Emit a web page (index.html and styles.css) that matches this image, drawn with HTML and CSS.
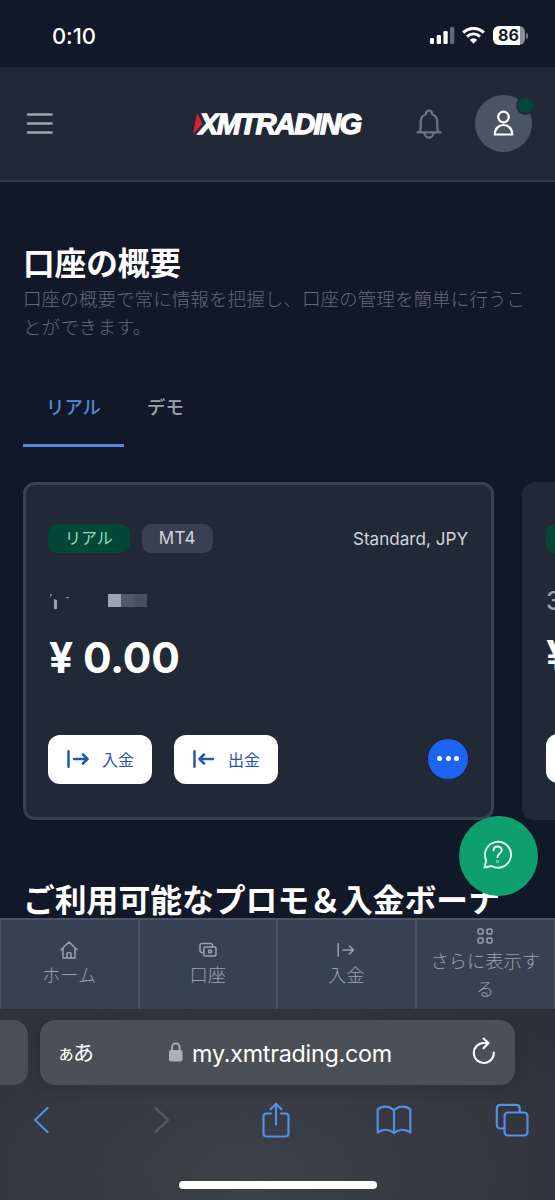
FILE: index.html
```html
<!DOCTYPE html>
<html lang="ja">
<head>
<meta charset="utf-8">
<meta name="viewport" content="width=device-width, initial-scale=1">
<title>口座の概要</title>
<link rel="stylesheet" href="styles.css">
</head>
<body>
<div class="phone">
  <div class="status">
    <span class="clock">0:10</span>
    <div class="indicators">
      <svg width="25" height="17" viewBox="0 0 25 17" fill="#fff"><rect x="0" y="11" width="4" height="6" rx="1.2"/><rect x="6.7" y="8" width="4.3" height="9" rx="1.2"/><rect x="13.4" y="4" width="4.3" height="13" rx="1.2"/><rect x="20" y="0" width="4.3" height="17" rx="1.2" opacity=".35"/></svg>
      <svg width="23" height="17" viewBox="0 0 23 17" fill="none" stroke="#fff"><path d="M1.2 5.7C7.2.1 15.8.1 21.8 5.7" stroke-width="3.2"/><path d="M5 9.7c4-3.6 9-3.6 13 0" stroke-width="3"/><path d="M7.8 12.700c2.300-2 5.100-2 7.400 0L11.500 16.800Z" fill="#fff" stroke="none"/></svg>
      <div class="battery"><span>86</span></div><i class="battery-tip"></i>
    </div>
  </div>
  <header class="header">
    <svg class="menu" width="27" height="22" viewBox="0 0 27 22" stroke="#9ca3af" stroke-width="2.600" stroke-linecap="round"><path d="M2 1.500h23.500M2 10.500h23.500M2 19.500h23.500"/></svg>
    <svg class="logo" width="176" height="28" viewBox="0 0 176 28">
      <path d="M5 3 10.500 13.500 1 24.500Z" fill="#d8232f"/>
      <text x="7" y="23.500" textLength="163" lengthAdjust="spacing" class="logo-text">XMTRADING</text>
    </svg>
    <svg class="bell" width="26" height="30" viewBox="0 0 26 30" fill="none" stroke="#6b7280" stroke-width="2.300" stroke-linejoin="round" stroke-linecap="round"><path d="M1.500 23.300h23M3.500 23.200c1-1.600 1.200-3 1.200-5.200v-5c0-4 1.800-6.400 5-7.700.2-2.200 1.400-3.700 3.300-3.700s3.100 1.500 3.300 3.700c3.200 1.300 5 3.700 5 7.700v5c0 2.200.2 3.600 1.200 5.200M8.500 24c.2 6 8.800 6 9 0"/></svg>
    <div class="avatar">
      <svg width="22" height="27" viewBox="0 0 22 27" fill="none" stroke="#fff" stroke-width="2.200" stroke-linejoin="round"><circle cx="10.500" cy="7" r="5.300"/><path d="M1.700 24.500c.2-12.700 17.400-12.700 17.600 0Z"/></svg>
      <i class="online"></i>
    </div>
  </header>
  <main class="main">
    <h1>口座の概要</h1>
    <p class="lead">口座の概要で常に情報を把握し、口座の管理を簡単に行うことができます。</p>
    <div class="tabs"><span class="tab active">リアル</span><span class="tab">デモ</span></div>
    <div class="cards">
      <section class="card selected">
        <div class="card-top"><span class="pill real">リアル</span><span class="pill">MT4</span><span class="type">Standard, JPY</span></div>
        <div class="account">
          <svg width="100" height="20" viewBox="0 0 100 20"><path d="M2 3h2l-1 3H2zM18 6h3v1.300h-3z" fill="#7c8390"/><path d="M6 8l3 1v9H6z" fill="#9ca3af"/><path d="M60 3h13v13H60z" fill="#9ca3b3"/><path d="M73 3h13v13H73z" fill="#515967"/><path d="M86 3h13v13H86z" fill="#48515f"/></svg>
        </div>
        <div class="balance">¥ 0.00</div>
        <div class="actions">
          <button class="btn"><svg width="22" height="18" viewBox="0 0 22 18"><path d="M1.500 1.200v15.600M7 9h13.300M16 4.500l4.500 4.500-4.500 4.500"/></svg>入金</button>
          <button class="btn"><svg width="22" height="18" viewBox="0 0 22 18"><path d="M1.500 1.200v15.600M20 9H6.500M11 4.500 6.500 9l4.500 4.500"/></svg>出金</button>
          <span class="more"><i></i><i></i><i></i></span>
        </div>
      </section>
      <section class="card next">
        <div class="card-top"><span class="pill real"></span></div>
        <div class="account number">3</div>
        <div class="balance">¥</div>
        <div class="actions"><span class="btn"></span></div>
      </section>
    </div>
    <h2>ご利用可能なプロモ＆入金ボーナ</h2>
    <div class="help">
      <svg width="31" height="31" viewBox="0 0 31 31" fill="none" stroke="#e7fff5" stroke-width="1.900" stroke-linecap="round" stroke-linejoin="round"><path d="M4.200 21.200A13 13 0 1 1 9.500 27L2.500 28.500Z"/><path d="M11.500 11.500c0-5.300 8.300-5.200 8.300-.4 0 3.100-4.300 3.400-4.300 7.200"/><circle cx="15.500" cy="22.500" r=".3"/></svg>
    </div>
  </main>
  <nav class="nav">
    <a><svg width="18" height="18" viewBox="0 0 18 18"><path d="M1 8.700 9 1l8 7.700M3 7v10h12V7M7 17v-4.500c0-1.500 4-1.500 4 0V17"/></svg>ホーム</a>
    <a><svg width="18" height="18" viewBox="0 0 18 18"><rect x="4.800" y="6" width="12.200" height="9" rx="1.500"/><path d="M4.500 11.500H3c-1.200 0-2-.8-2-2V4.300c0-1.100.8-1.800 2-1.800h8.500c1.200 0 2 .6 2 1.800V6"/><circle cx="11" cy="10.500" r="1.600"/></svg>口座</a>
    <a><svg width="18" height="18" viewBox="0 0 18 18"><path d="M1.200 2.500v12.600M6 9h10.500M12.500 5l4 4-4 4"/></svg>入金</a>
    <a><svg width="18" height="18" viewBox="0 0 18 18"><rect x="2" y="2" width="5" height="5" rx="1.600"/><rect x="11" y="2" width="5" height="5" rx="1.600"/><rect x="2" y="11" width="5" height="5" rx="1.600"/><rect x="11" y="11" width="5" height="5" rx="1.600"/></svg>さらに表示する</a>
  </nav>
  <footer class="browser">
    <div class="address-row">
      <div class="prev-tab"></div>
      <div class="address">
        <span class="aa"><small>ぁ</small>あ</span>
        <div class="url"><svg width="14" height="20" viewBox="0 0 14 20"><rect y="8" width="13.500" height="11.500" rx="2" fill="#adafb9"/><path d="M3 9V5.500C3 0 10.500 0 10.500 5.500V9" fill="none" stroke="#adafb9" stroke-width="1.800"/></svg><span>my.xmtrading.com</span></div>
        <svg class="reload" width="24" height="28" viewBox="0 0 24 28" fill="none" stroke="#fff" stroke-width="2" stroke-linecap="round" stroke-linejoin="round"><path d="M21.800 15.500A10 10 0 1 1 11.800 6h4.500M11.500 1.500 16.500 6l-5 5.300"/></svg>
      </div>
    </div>
    <div class="toolbar">
      <svg width="16" height="28" viewBox="0 0 16 28"><path d="M14.500 2 2 14l12.500 12"/></svg>
      <svg class="off" width="16" height="28" viewBox="0 0 16 28"><path d="M1.500 2 14 14 1.500 26"/></svg>
      <svg width="28" height="36" viewBox="0 0 28 36"><path d="M9 11.500H4.500c-2 0-3 1-3 3v17c0 2 1 3 3 3h19c2 0 3-1 3-3v-17c0-2-1-3-3-3H19M14 22.500V2M8.500 7.200 14 1.700l5.500 5.500"/></svg>
      <svg width="36" height="30" viewBox="0 0 36 30"><path d="M18 5.500C13.500.5 6 .5 1.700 4.500v23c5-3.500 11.300-3.500 16.300.5 5-4 11.300-4 16.300-.5v-23C30 .5 22.500.5 18 5.500ZM18 5.500V28"/></svg>
      <svg width="34" height="34" viewBox="0 0 34 34"><rect x="9.500" y="9.500" width="23" height="23" rx="3.500"/><path d="M9.500 25.500H5.500c-2.300 0-3.700-1.400-3.700-3.700V5.500c0-2.300 1.400-3.700 3.700-3.700H21c2.300 0 3.700 1.400 3.700 3.700v4"/></svg>
    </div>
    <div class="home-bar"></div>
  </footer>
</div>
</body>
</html>
```
FILE: styles.css
```css
* { box-sizing: border-box; }
body { margin: 0; background: #111827; font-family: Inter, "Noto Sans CJK JP", sans-serif; color: #fff; }
svg { display: block; flex: none; }
.phone { width: 555px; height: 1200px; display: flex; flex-direction: column; overflow: hidden; }

.status { height: 67px; flex: none; padding: 4px 27px 0 52px; display: flex; align-items: center; justify-content: space-between; }
.clock { font-size: 22px; font-weight: 500; letter-spacing: -.1px; }
.indicators { display: flex; align-items: center; }
.indicators svg + svg { margin-left: 7px; }
.battery { margin-left: 8px; width: 32px; height: 19px; border-radius: 6px; background: linear-gradient(90deg, #fff 84%, #8b8e97 84%); color: #111827; font-size: 16px; font-weight: 700; line-height: 19px; padding-left: 5px; }
.battery-tip { width: 2px; height: 6px; margin-left: 1px; border-radius: 0 2px 2px 0; background: #747985; }

.header { height: 115px; flex: none; background: #212936; border-bottom: 2px solid #343d4b; display: flex; align-items: center; padding: 0 23px 0 26px; }
.logo { margin-left: 139px; overflow: visible; }
.logo-text { font: italic 700 29px "Liberation Sans", sans-serif; fill: #fff; stroke: #fff; stroke-width: 1.300; }
.bell { margin-left: 48px; }
.avatar { margin-left: 33px; width: 57px; height: 57px; border-radius: 50%; background: #4c5564; display: flex; align-items: center; justify-content: center; position: relative; }
.avatar svg { margin-top: -1px; }
.online { position: absolute; right: -3px; top: 1px; width: 19px; height: 19px; border-radius: 50%; background: #02483a; border: 2px solid #1d2d38; }

.main { height: 736px; flex: none; padding: 61px 0 0 23px; position: relative; overflow: hidden; }
h1, h2 { margin: 0; font-size: 31.600px; line-height: 40px; font-weight: 700; white-space: nowrap; }
h1 { padding-top: 1px; }
.lead { margin: 1px 0 0; width: 512px; font-size: 18.600px; line-height: 28px; color: #626977; font-weight: 300; line-break: anywhere; }
.tabs { display: flex; margin-top: 41px; height: 65px; }
.tab { padding: 11px 23px 0; font-size: 18.400px; line-height: 28px; font-weight: 500; color: #9ca3af; }
.active { color: #5787dc; border-bottom: 3px solid #5787dc; }
.cards { margin-top: 35px; display: flex; gap: 28px; }
.card { flex: none; width: 471px; height: 338px; border-radius: 12px; background: #212936; padding: 42px 25px 0; }
.selected { border: 3px solid #384150; padding: 39px 23px 0 22px; }
.next { padding-left: 24px; width: 160px; }
.card-top { height: 29px; display: flex; align-items: center; gap: 12px; }
.pill { height: 29px; border-radius: 9px; padding: 0 17px; background: #384051; color: #d1d5db; font-size: 17px; line-height: 29px; font-weight: 400; letter-spacing: .3px; }
.real { background: #034737; color: #84e1bc; font-size: 16px; letter-spacing: 0; }
.next .real { width: 82px; }
.type { margin-left: auto; font-size: 17.100px; font-weight: 400; color: #d1d5db; }
.account { height: 40px; margin-top: 38px; }
.number { font-size: 25px; line-height: 20px; color: #9ca3af; font-weight: 500; }
.balance { margin: -3px 0 0 1px; font-size: 42.500px; line-height: 60px; font-weight: 700; white-space: pre; letter-spacing: -.2px; }
.next .balance { margin: -6px 0 0; font-size: 41px; }
.actions { display: flex; align-items: center; gap: 22px; margin-top: 47px; }
.next .actions { margin-top: 49px; }
.btn { border: 0; margin: 0; width: 104px; height: 49px; border-radius: 12px; background: #fff; color: #2457b4; font: 400 16px Inter, "Noto Sans CJK JP", sans-serif; display: flex; align-items: center; gap: 13px; padding: 0 0 2px 19px; }
.btn svg { fill: none; stroke: #2457b4; stroke-width: 2.500; stroke-linecap: round; stroke-linejoin: round; }
.more { margin: -2px 0 0 auto; width: 40px; height: 40px; border-radius: 50%; background: #1c64f2; display: flex; gap: 3.500px; align-items: center; justify-content: center; }
.more i { width: 5px; height: 5px; border-radius: 50%; background: #fff; margin-top: -1px; }
h2 { margin-top: 61px; font-size: 31.800px; }
.help { position: absolute; left: 459px; top: 634px; width: 79px; height: 80px; border-radius: 50%; background: #0e9f6e; display: flex; align-items: center; justify-content: center; padding: 0 2px 4px 0; }

.nav { height: 91px; flex: none; background: #384151; border-top: 2px solid #4b5563; border-left: 1px solid #4b5563; display: grid; grid-template-columns: repeat(4, 1fr); }
.nav a { border-right: 2px solid #4b5563; display: flex; flex-direction: column; align-items: center; justify-content: center; padding: 0 10px 2px; text-align: center; color: #9ba2af; font-size: 18.300px; line-height: 28px; font-weight: 300; }
.nav a svg { fill: none; stroke: #9ca3af; stroke-width: 1.500; stroke-linecap: round; stroke-linejoin: round; margin: 2px 0; }
.nav a:last-child { border-right-width: 1px; }

.browser { height: 191px; flex: none; background: radial-gradient(ellipse at 45% 85%, #3c4048 0%, #343841 55%, #2b2f38 100%); display: flex; flex-direction: column; align-items: center; }
.address-row { align-self: stretch; display: flex; gap: 12px; padding-top: 11px; }
.prev-tab { width: 28px; height: 65px; border-radius: 0 15px 15px 0; background: #4a4e56; }
.address { width: 475px; height: 65px; border-radius: 15px; background: #4b4f57; box-shadow: 0 3px 14px rgba(20, 24, 32, .25); display: flex; align-items: center; justify-content: space-between; padding: 0 19px 0 17px; }
.aa { font-size: 21px; font-weight: 400; white-space: nowrap; margin-top: -3px; }
.aa small { font-size: 18px; margin-right: -2px; }
.url { display: flex; align-items: center; gap: 9px; font-size: 23.300px; letter-spacing: -.25px; margin: 1px 5px 0 0; }
.url svg { margin-top: -3px; }
.reload { margin-top: -3px; }
.toolbar { align-self: stretch; height: 70px; display: grid; grid-template-columns: repeat(5, 117.800px); place-items: center; margin-left: -18px; }
.toolbar svg { fill: none; stroke: #568de5; stroke-width: 2.200; stroke-linecap: round; stroke-linejoin: round; }
.toolbar .off { stroke: #575b63; position: relative; left: 3px; }
.home-bar { width: 198px; height: 8px; border-radius: 4px; background: #fff; margin-top: 26px; }
```
